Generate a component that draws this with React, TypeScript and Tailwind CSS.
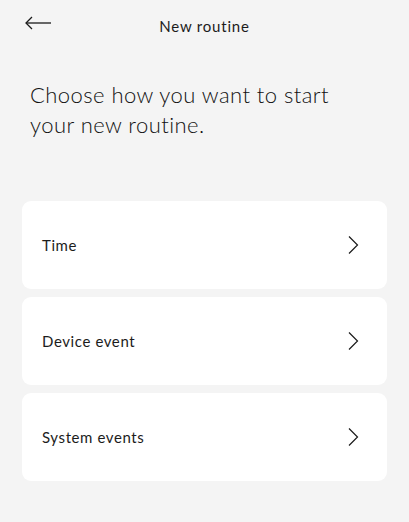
import React from 'react';

const options = ['Time', 'Device event', 'System events'];

const BackArrow = () => (
  <svg width="28" height="14" viewBox="0 0 28 14" fill="none" stroke="#1a1a1a" strokeWidth="1.3">
    <path d="M27 7H2" />
    <path d="M8 1L2 7l6 6" />
  </svg>
);

const Chevron = () => (
  <svg width="12" height="20" viewBox="0 0 12 20" fill="none" stroke="#1a1a1a" strokeWidth="1.2">
    <path d="M2 1.5l8.5 8.5L2 18.5" />
  </svg>
);

export default function App() {
  return (
    <div
      className="w-[409px] h-[522px] bg-[#f4f4f4] text-[#1c1c1c] overflow-hidden"
      style={{ fontFamily: 'Lato, "Open Sans", sans-serif' }}
    >
      {/* Header */}
      <div className="relative h-[52px] flex items-center justify-center">
        <button className="absolute left-[24px] top-[16px]">
          <BackArrow />
        </button>
        <h1 className="text-[15px] font-normal tracking-[0.8px] pt-[1px]">New routine</h1>
      </div>

      <p className="mt-[28px] px-[30px] text-[22px] leading-[30px] font-light tracking-[0.45px] text-[#111]">
        Choose how you want to start
        <br />
        your new routine.
      </p>

      <div className="mt-[61px] px-[22px] flex flex-col gap-[8px]">
        {options.map((o) => (
          <div
            key={o}
            className="h-[88px] bg-white rounded-[9px] flex items-center justify-between pl-[20px] pr-[28px]"
          >
            <span className="text-[15px] font-normal tracking-[0.6px]">{o}</span>
            <Chevron />
          </div>
        ))}
      </div>
    </div>
  );
}
